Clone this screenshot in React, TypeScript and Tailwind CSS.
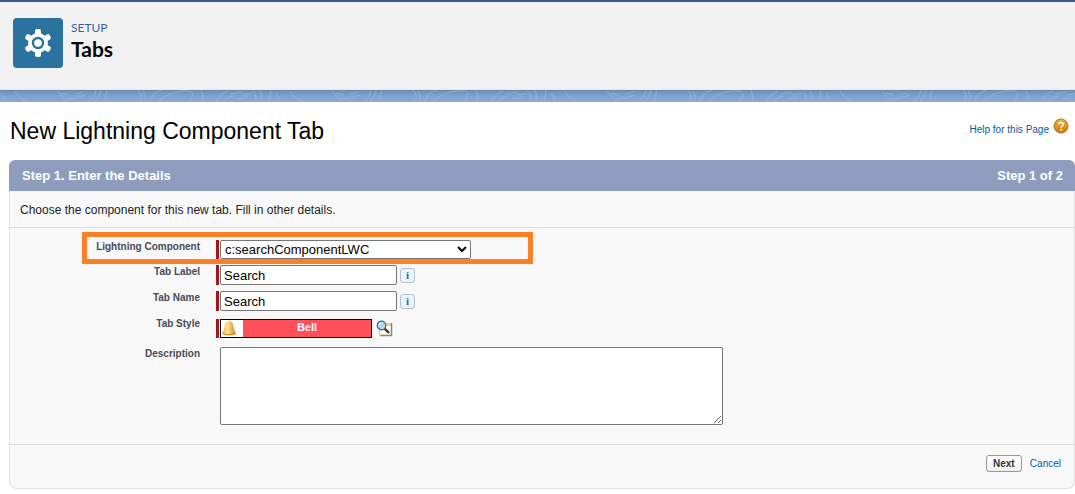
import { useState, ReactNode } from "react";

interface FieldRowProps {
  id: string;
  label: string;
  required?: boolean;
  highlighted?: boolean;
  roomy?: boolean;
  children: ReactNode;
}

function FieldRow({ id, label, required, highlighted, roomy, children }: FieldRowProps) {
  return (
    <div className="relative flex items-start">
      <label
        htmlFor={id}
        className="w-[190px] shrink-0 text-right text-[10px] leading-[14px] font-bold text-[#4a4a56]"
      >
        {label}
      </label>
      <div className={`ml-4 flex min-w-0 grow items-stretch ${roomy ? "pt-0.5 pb-[3px]" : ""}`}>
        <span className={`mr-px w-[3px] shrink-0 ${required ? "bg-[#a3161c]" : ""}`} />
        {children}
      </div>
      {highlighted && (
        <div className="pointer-events-none absolute -top-2 left-[72px] h-8 w-[451px] border-5 border-[#fb8126]" />
      )}
    </div>
  );
}

function InfoButton() {
  return (
    <button
      type="button"
      aria-label="Info"
      className="ml-[3px] h-[15px] w-[15px] self-center rounded-[3px] border border-[#b5bfcb] bg-[#edf3fa] font-['Liberation_Serif',serif] text-[11px] leading-3 font-bold text-[#2468a8]"
    >
      i
    </button>
  );
}

function GearIcon() {
  return (
    <div className="flex h-[50px] w-[50px] items-center justify-center rounded bg-[#2a739e]">
      <svg viewBox="0 0 28 30" className="h-[30px] w-7" fill="none">
        <g fill="#fff">
          <circle cx="14" cy="15" r="10" />
          <rect x="11" y="1" width="6" height="28" rx="2" />
          <rect x="11" y="1" width="6" height="28" rx="2" transform="rotate(60 14 15)" />
          <rect x="11" y="1" width="6" height="28" rx="2" transform="rotate(120 14 15)" />
        </g>
        <circle cx="14" cy="15" r="5" stroke="#2a739e" strokeWidth="2.4" />
      </svg>
    </div>
  );
}

function ContourBand() {
  return (
    <div className="h-3 bg-linear-to-b from-[#6b8cb3] via-[#7fa3cf] to-[#88abd5]">
      <svg className="block h-3 w-full" fill="none" stroke="#a9c6e6" strokeOpacity="0.45">
        <defs>
          <pattern id="contours" width="275" height="12" patternUnits="userSpaceOnUse">
            <path d="M1 3Q5 7 4 12M15 1Q19 8 28 12M57 1Q63 7 67 12M61 3L69 5M75 4L83 2M67 9L79 7 85 5M96 0Q95 7 89 12M101 0Q100 7 95 12M107 0L104 12M138 0Q144 6 139 12M143 1Q147 7 143 12M150 12Q151 3 162 0M158 12Q166 3 181 1T192 7L190 12M201 0Q204 6 202 12M217 12Q219 4 228 1M223 12Q226 7 233 6M230 4L240 2 244 5 252 3M238 9L248 7M253 1Q258 6 254 12M260 0Q263 6 261 12M271 0L269 12" />
          </pattern>
        </defs>
        <rect width="100%" height="12" fill="url(#contours)" stroke="none" />
      </svg>
    </div>
  );
}

function HelpIcon() {
  return (
    <svg viewBox="0 0 16 16" className="h-4 w-4">
      <defs>
        <linearGradient id="help" x2="0" y2="1">
          <stop stopColor="#f3b238" />
          <stop offset="1" stopColor="#d27a08" />
        </linearGradient>
      </defs>
      <circle cx="8" cy="8" r="7" fill="url(#help)" stroke="#a9701c" />
      <path
        d="M5.8 6.2C6 3.8 10.4 3.8 10.2 6.4C10.1 7.8 8.1 7.9 8.1 9.5"
        fill="none"
        stroke="#fff"
        strokeWidth="1.6"
      />
      <circle cx="8.1" cy="11.7" r="1" fill="#fff" />
    </svg>
  );
}

function BellIcon() {
  return (
    <svg viewBox="0 0 16 16" className="h-4 w-4">
      <defs>
        <linearGradient id="bell">
          <stop stopColor="#f0b340" />
          <stop offset="0.4" stopColor="#ffe291" />
          <stop offset="1" stopColor="#cf861d" />
        </linearGradient>
      </defs>
      <path
        d="M7 1Q8 0 9 1Q12 2 12.4 6Q13 10 15 13Q13 15.5 8 15.3Q3 15 1 13Q3.5 9 4 5Q4.3 2 7 1Z"
        fill="url(#bell)"
      />
      <path d="M1 13Q7 15.5 15 13L14 14.6Q8 16 2 14.4Z" fill="#c98320" />
    </svg>
  );
}

function LookupIcon() {
  return (
    <svg viewBox="0 0 17 17" className="h-[17px] w-[17px]" fill="none">
      <path d="M4 3H15V16H4Z" fill="#fffbe9" />
      <path d="M8 3H15V6H8Z" fill="#f5cf79" />
      <path d="M15.5 3V15.5H4" stroke="#8c8574" strokeWidth="1.5" />
      <path d="M3.5 10V15" stroke="#c9c4b4" />
      <path d="M8.5 8.5L13 13" stroke="#333" strokeWidth="2.4" />
      <circle cx="5.5" cy="5.5" r="4.3" fill="#a9d6f1" stroke="#47677d" strokeWidth="1.2" />
      <path d="M3 5Q3.5 3 5.5 3" stroke="#fff" strokeWidth="1.2" />
    </svg>
  );
}

export default function App() {
  const [component, setComponent] = useState("c:searchComponentLWC");
  const [tabLabel, setTabLabel] = useState("Search");
  const [tabName, setTabName] = useState("Search");
  const [description, setDescription] = useState("");

  const inputClass =
    "h-5 w-[177px] rounded-xs border border-[#767676] bg-white px-[3px] text-[13px] text-black";

  return (
    <div className="bg-white font-['Liberation_Sans',Arial,sans-serif] text-[#222]">
      <header className="border-t-2 border-[#34598f] font-['Lato',sans-serif]">
        <div className="flex h-[88px] items-start gap-2 border-b border-[#e4e5ea] bg-[#f3f2f2] px-[13px] pt-4">
          <GearIcon />
          <div>
            <p className="text-xs leading-5 text-[#3a5fa5]">SETUP</p>
            <h1 className="text-[21px] leading-[22px] font-bold text-[#080707]">Tabs</h1>
          </div>
        </div>
        <ContourBand />
      </header>

      <main className="pt-[14px] pb-1 pl-[9px]">
        <div className="flex items-start justify-between pr-[6px] pl-px">
          <h2 className="text-[23px] leading-[30px] text-black">New Lightning Component Tab</h2>
          <a href="#help" className="flex items-start gap-1 pt-0.5 text-[10px] text-[#015ba7]">
            <span className="pt-1 leading-4">Help for this Page</span>
            <HelpIcon />
          </a>
        </div>

        <form
          className="mt-[14px] rounded-lg border border-t-0 border-[#e0e0e0] bg-[#f8f8f8]"
          onSubmit={(e) => e.preventDefault()}
        >
          <div className="-mx-px flex h-[31px] items-center justify-between rounded-t-md bg-[#8e9dbe] pr-3 pl-[13px] text-[13px] font-bold text-white">
            <h3>Step 1. Enter the Details</h3>
            <span>Step 1 of 2</span>
          </div>
          <p className="border-b border-[#dbdbdb] px-[10px] pt-[11px] pb-[9px] text-xs leading-4">
            Choose the component for this new tab. Fill in other details.
          </p>

          <div className="flex flex-col gap-[6px] pt-3 pb-[19px]">
            <FieldRow id="component" label="Lightning Component" required highlighted>
              <select
                id="component"
                value={component}
                onChange={(e) => setComponent(e.target.value)}
                className="h-[19px] w-[251px] rounded-xs border border-[#767676] bg-white text-[13px] text-black"
              >
                <option>c:searchComponentLWC</option>
              </select>
            </FieldRow>
            <FieldRow id="tab-label" label="Tab Label" required>
              <input
                id="tab-label"
                type="text"
                value={tabLabel}
                onChange={(e) => setTabLabel(e.target.value)}
                className={inputClass}
              />
              <InfoButton />
            </FieldRow>
            <FieldRow id="tab-name" label="Tab Name" required>
              <input
                id="tab-name"
                type="text"
                value={tabName}
                onChange={(e) => setTabName(e.target.value)}
                className={inputClass}
              />
              <InfoButton />
            </FieldRow>
            <FieldRow id="tab-style" label="Tab Style" required roomy>
              <button
                id="tab-style"
                type="button"
                className="flex h-[19px] w-[152px] border border-black bg-[#ff505c] text-[11px] leading-[14px] font-bold text-white"
              >
                <span className="h-full w-[22px] bg-white">
                  <BellIcon />
                </span>
                <span className="grow">Bell</span>
              </button>
              <button type="button" aria-label="Tab Style Lookup" className="ml-1">
                <LookupIcon />
              </button>
            </FieldRow>
            <FieldRow id="description" label="Description">
              <textarea
                id="description"
                value={description}
                onChange={(e) => setDescription(e.target.value)}
                className="h-[78px] w-[503px] rounded-xs border border-[#767676] bg-white p-0.5 text-[13px]"
              />
            </FieldRow>
          </div>

          <div className="flex items-start justify-end gap-2 border-t border-[#dbdbdb] pt-[10px] pr-[13px] pb-4 text-[10px]">
            <button
              type="submit"
              className="h-[17px] w-9 rounded-[3px] border border-[#999] bg-linear-to-b from-white to-[#f0f0f0] leading-[15px] font-bold text-[#333]"
            >
              Next
            </button>
            <a href="#cancel" className="leading-[17px] text-[#015ba7]">
              Cancel
            </a>
          </div>
        </form>
      </main>
    </div>
  );
}
